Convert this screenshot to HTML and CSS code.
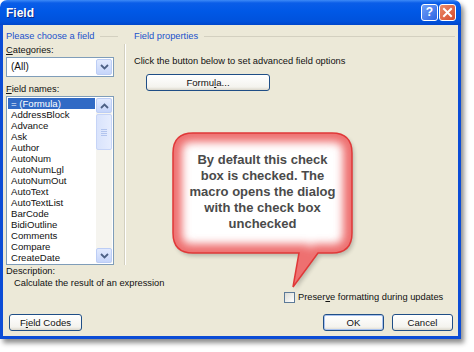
FILE: index.html
```html
<!DOCTYPE html>
<html lang="en">
<head>
  <meta charset="UTF-8" />
  <title>Field</title>
  <link rel="stylesheet" href="styles.css">
</head>
<body>
  <div class="window">
    <div class="titlebar">
      <span class="title">Field</span>
      <div class="caption-btns">
        <span class="cap-btn help">?</span>
        <span class="cap-btn close">
          <svg width="11" height="11" viewBox="0 0 11 11"><path d="M2 2 L9 9 M9 2 L2 9" stroke="#fff" stroke-width="2" stroke-linecap="square"/></svg>
        </span>
      </div>
    </div>

    <div class="client">
      <div class="top">
        <!-- left: field list -->
        <div class="left">
          <div class="group-head"><span>Please choose a field</span></div>
          <div class="label"><u>C</u>ategories:</div>
          <div class="combo">
            <span class="combo-value">(All)</span>
            <span class="drop-btn">
              <svg width="9" height="6" viewBox="0 0 9 6"><path d="M1 1 L4.5 4.5 L8 1" fill="none" stroke="#4D6185" stroke-width="1.8"/></svg>
            </span>
          </div>
          <div class="label names"><u>F</u>ield names:</div>
          <div class="listbox">
            <ul class="items" id="fieldList"></ul>
            <div class="scrollbar">
              <span class="sb-btn">
                <svg width="9" height="6" viewBox="0 0 9 6"><path d="M1 5 L4.5 1.5 L8 5" fill="none" stroke="#4D6185" stroke-width="1.8"/></svg>
              </span>
              <div class="sb-track">
                <div class="sb-thumb"><span></span><span></span><span></span><span></span></div>
              </div>
              <span class="sb-btn">
                <svg width="9" height="6" viewBox="0 0 9 6"><path d="M1 1 L4.5 4.5 L8 1" fill="none" stroke="#4D6185" stroke-width="1.8"/></svg>
              </span>
            </div>
          </div>
        </div>

        <!-- right: field properties -->
        <div class="right">
          <div class="group-head props-head"><span>Field properties</span></div>
          <div class="props">
            <div class="hint">Click the button below to set advanced field options</div>
            <button class="btn formula">Formu<u>l</u>a...</button>
          </div>
        </div>
      </div>

      <div class="desc">
        <div class="desc-label">Description:</div>
        <div class="desc-text">Calculate the result of an expression</div>
      </div>

      <div class="check-row">
        <span class="checkbox"></span>
        <span>Preser<u>v</u>e formatting during updates</span>
      </div>

      <div class="btn-row">
        <button class="btn codes">F<u>i</u>eld Codes</button>
        <button class="btn ok">OK</button>
        <button class="btn cancel">Cancel</button>
      </div>
    </div>
  </div>

  <!-- callout over the dialog -->
  <svg class="callout-shape" width="474" height="352" viewBox="0 0 474 352">
    <defs>
      <path id="bubble" d="M193 133 H332 Q352 133 352 153 V233 Q352 253 332 253 H318 L293 287 L299 253 H193 Q173 253 173 233 V153 Q173 133 193 133 Z"/>
      <clipPath id="bubbleClip"><use href="#bubble"/></clipPath>
      <filter id="glow" x="-20%" y="-20%" width="140%" height="140%"><feGaussianBlur stdDeviation="4"/></filter>
      <filter id="drop" x="-20%" y="-20%" width="140%" height="140%"><feGaussianBlur stdDeviation="2"/></filter>
    </defs>
    <use href="#bubble" fill="#000" opacity="0.22" transform="translate(2 3)" filter="url(#drop)"/>
    <use href="#bubble" fill="#fff"/>
    <g clip-path="url(#bubbleClip)">
      <use href="#bubble" fill="none" stroke="#EE7070" stroke-width="18" filter="url(#glow)"/>
    </g>
    <use href="#bubble" fill="none" stroke="#E03838" stroke-width="1.5"/>
  </svg>
  <div class="callout-text">By default this check<br>box is checked. The<br>macro opens the dialog<br>with the check box<br>unchecked</div>

  <script>
    // list of field names
    const fields = ["= (Formula)", "AddressBlock", "Advance", "Ask", "Author", "AutoNum",
      "AutoNumLgl", "AutoNumOut", "AutoText", "AutoTextList", "BarCode", "BidiOutline",
      "Comments", "Compare", "CreateDate"];
    const list = document.getElementById("fieldList");
    fields.forEach((name, idx) => {
      const li = document.createElement("li");
      li.textContent = name;
      if (idx === 0) li.className = "sel";
      list.appendChild(li);
    });
  </script>
</body>
</html>
```

FILE: styles.css
```css
body {
  margin: 0;
  background: #fff;
  font-family: 'Liberation Sans', Arial, sans-serif;
  font-size: 9.3px;
  color: #111;
  position: relative;
  width: 474px;
  height: 352px;
  overflow: hidden;
}
u { text-decoration: underline; }
.window {
  width: 461px;
  height: 339px;
  display: flex;
  flex-direction: column;
  border-radius: 7px 7px 0 0;
  box-shadow: 3px 4px 5px rgba(0,0,0,0.45);
}
.titlebar {
  height: 25px;
  box-sizing: border-box;
  padding: 0 5px 0 6px;
  display: flex;
  align-items: center;
  justify-content: space-between;
  border-radius: 7px 7px 0 0;
  background: linear-gradient(#3D8AF7 0, #0A5DE8 3px, #0058E6 45%, #0052DC 85%, #0047CB 100%);
}
.title {
  color: #fff;
  font-weight: bold;
  font-size: 12px;
  text-shadow: 1px 1px 0 #0A2A8A;
}
.caption-btns {
  display: flex;
  gap: 1px;
}
.cap-btn {
  width: 15px;
  height: 15px;
  border: 1px solid #fff;
  border-radius: 3px;
  display: flex;
  align-items: center;
  justify-content: center;
}
.help {
  background: linear-gradient(135deg, #6FA0F8, #2D63E2);
  color: #fff;
  font-weight: bold;
  font-size: 12px;
  line-height: 15px;
}
.close {
  background: linear-gradient(135deg, #EC8C6A, #D44A2C);
}
.client {
  flex: 1;
  background: #ECE9D8;
  border: 3px solid #0B4CD6;
  border-top: 0;
  padding: 5px 3px 0 3px;
  display: flex;
  flex-direction: column;
}
.top {
  display: flex;
  gap: 6px;
  height: 235px;
}
.left {
  width: 112px;
  display: flex;
  flex-direction: column;
}
.group-head {
  height: 12px;
  line-height: 12px;
  display: flex;
  align-items: center;
  gap: 6px;
  color: #2152CC;
  white-space: nowrap;
}
.group-head::after {
  content: "";
  flex: 1;
  height: 1px;
  background: #D3D0C0;
}
.label {
  height: 12px;
  line-height: 12px;
  margin-top: 2px;
}
.label.names { margin-top: 6px; }
.combo {
  margin-top: 1px;
  width: 108px;
  height: 20px;
  box-sizing: border-box;
  border: 1px solid #7F9DB9;
  background: #fff;
  padding: 1px;
  display: flex;
  align-items: stretch;
  justify-content: space-between;
}
.combo-value {
  padding-left: 3px;
  line-height: 16px;
  font-size: 10px;
}
.drop-btn, .sb-btn {
  width: 16px;
  box-sizing: border-box;
  border: 1px solid #BCCDF5;
  border-radius: 2px;
  background: linear-gradient(#E2EAFE, #C6D5FA);
  display: flex;
  align-items: center;
  justify-content: center;
}
.listbox {
  margin-top: 1px;
  width: 108px;
  height: 169px;
  box-sizing: border-box;
  border: 1px solid #7F9DB9;
  background: #fff;
  padding: 1px;
  display: flex;
}
.items {
  flex: 1;
  list-style: none;
  margin: 0;
  padding: 0;
}
.items li {
  height: 11px;
  line-height: 11px;
  padding-left: 3px;
  font-size: 9.6px;
  white-space: nowrap;
}
.items li.sel {
  background: #316AC5;
  color: #fff;
  margin-right: 1px;
}
.scrollbar {
  width: 16px;
  display: flex;
  flex-direction: column;
  background: #F5F4EF;
}
.sb-btn { height: 15px; }
.sb-track {
  flex: 1;
  padding-top: 1px;
}
.sb-thumb {
  height: 36px;
  box-sizing: border-box;
  border: 1px solid #C6D4F7;
  border-radius: 2px;
  background: linear-gradient(90deg, #D9E3FC, #E6EDFE);
  display: flex;
  flex-direction: column;
  align-items: center;
  justify-content: center;
  gap: 1px;
}
.sb-thumb span {
  width: 6px;
  height: 1px;
  background: #B2C4EE;
}
.right {
  flex: 1;
  display: flex;
  flex-direction: column;
}
.props-head { padding-left: 10px; }
.props {
  margin-top: 2px;
  height: 219px;
  border-left: 1px solid #D3D0C0;
  box-shadow: inset 1px 0 0 #fff;
  padding: 11px 0 0 9px;
}
.hint {
  height: 12px;
  line-height: 12px;
}
.btn {
  box-sizing: border-box;
  height: 17px;
  padding: 0;
  border: 1px solid #1F4E86;
  border-radius: 3px;
  background: linear-gradient(#FFFFFF, #F4F3EE 80%, #DCD8CC);
  font-family: inherit;
  font-size: 9.6px;
  color: #111;
}
.formula {
  display: block;
  margin: 7px 0 0 12px;
  width: 124px;
}
.desc-label, .desc-text {
  height: 12px;
  line-height: 12px;
}
.desc-text { padding-left: 8px; }
.check-row {
  margin-top: 2px;
  height: 12px;
  padding-left: 278px;
  display: flex;
  align-items: center;
  gap: 3px;
}
.checkbox {
  width: 11px;
  height: 11px;
  box-sizing: border-box;
  border: 1px solid #5C7A98;
  background: linear-gradient(135deg, #DCDCD5, #FFFFFF);
}
.btn-row {
  margin-top: 11px;
  display: flex;
}
.codes {
  margin-left: 3px;
  width: 73px;
}
.ok {
  margin-left: auto;
  width: 61px;
  box-shadow: inset 0 0 0 1px #A9C2EE;
}
.cancel {
  margin-left: 8px;
  margin-right: 2px;
  width: 61px;
}
.callout-shape {
  position: absolute;
  left: 0;
  top: 0;
  pointer-events: none;
}
.callout-text {
  position: absolute;
  left: 173px;
  top: 152px;
  width: 179px;
  text-align: center;
  font-weight: bold;
  font-size: 13px;
  line-height: 16px;
  color: #4A4A4A;
}
```
